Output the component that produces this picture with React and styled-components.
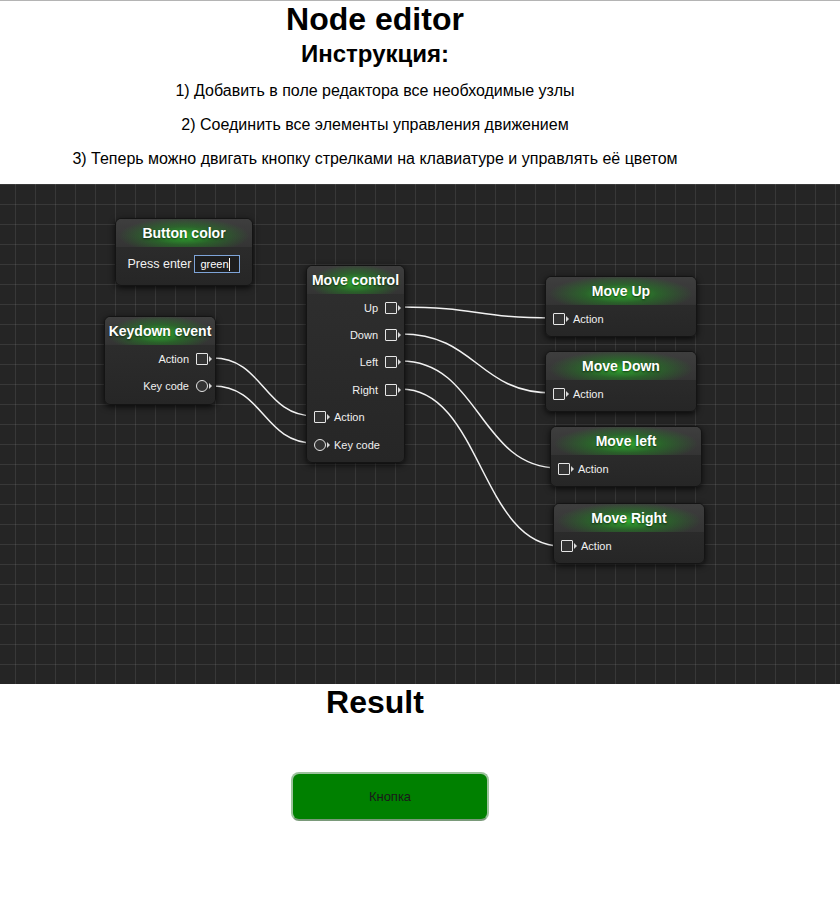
import React from "react";
import styled, { createGlobalStyle } from "styled-components";

const Global = createGlobalStyle`
  html, body { margin: 0; padding: 0; background: #fff; }
  body { font-family: "Liberation Sans", Arial, sans-serif; border-top: 1px solid #b4b4b4; }
`;

const Page = styled.div`
  width: 840px;
`;

const Intro = styled.header`
  width: 750px;
  text-align: center;
  color: #000;
`;

const Title = styled.h1`
  margin: 0;
  font-size: 32px;
  line-height: 37px;
  font-weight: 700;
`;

const Subtitle = styled.h2`
  margin: 2px 0 0;
  font-size: 24px;
  line-height: 27px;
  font-weight: 700;
`;

const Steps = styled.div`
  display: flex;
  flex-direction: column;
  gap: 16px;
  padding-top: 15px;
`;

const Step = styled.p`
  margin: 0;
  font-size: 16px;
  line-height: 18px;
`;

const Canvas = styled.section`
  position: relative;
  margin-top: 16px;
  width: 840px;
  height: 500px;
  background-color: #252525;
  background-image:
    linear-gradient(to right, rgba(255,255,255,0.085) 1px, transparent 1px),
    linear-gradient(to bottom, rgba(255,255,255,0.085) 1px, transparent 1px);
  background-size: 20px 20px;
  background-position: 15px 0;
  overflow: hidden;
`;

const Wires = styled.svg`
  position: absolute;
  left: 0;
  top: 0;
  pointer-events: none;
`;

const NodeBox = styled.div`
  position: absolute;
  box-sizing: border-box;
  border-radius: 6px;
  background: linear-gradient(to bottom, #2f2f2f, #262626);
  border: 1px solid #141414;
  box-shadow: 0 2px 6px rgba(0,0,0,0.75), inset 0 1px 0 rgba(255,255,255,0.12);
  padding-bottom: 4px;
  font-family: "Liberation Sans", Arial, sans-serif;
  color: #fff;
`;

const NodeHeader = styled.div`
  height: 28px;
  display: flex;
  align-items: center;
  justify-content: center;
  border-radius: 6px 6px 0 0;
  background:
    radial-gradient(ellipse 48% 65% at 50% 60%, rgba(45,185,45,0.9) 0%, rgba(30,140,30,0.5) 50%, rgba(30,120,30,0) 100%),
    linear-gradient(to bottom, #3e3e3e, #343434);
  font-size: 14px;
  font-weight: 700;
  text-shadow: 0 1px 2px rgba(0,0,0,0.6);
  white-space: nowrap;
`;

const Row = styled.div`
  height: 27.4px;
  display: flex;
  align-items: center;
  justify-content: ${(p) => (p.$out ? "flex-end" : "flex-start")};
  padding: ${(p) => (p.$out ? "0 3px 0 0" : "0 0 0 7px")};
  gap: 4px;
  font-size: 11px;
  color: #f0f0f0;
  white-space: nowrap;
`;

const Label = styled.span`
  ${(p) => (p.$out ? "margin-right: 3px;" : "margin-left: 0;")}
`;

const SocketWrap = styled.span`
  display: inline-flex;
  align-items: center;
  gap: 1px;
`;

const Socket = styled.span`
  display: inline-block;
  box-sizing: border-box;
  width: 12px;
  height: 12px;
  border: 1.5px solid #e6e6e6;
  background: #333;
  border-radius: ${(p) => (p.$round ? "50%" : "1px")};
`;

const Arrow = styled.span`
  width: 0;
  height: 0;
  border-top: 3px solid transparent;
  border-bottom: 3px solid transparent;
  border-left: 3px solid #d8d8d8;
`;

const FieldRow = styled.div`
  display: flex;
  align-items: center;
  justify-content: center;
  gap: 3px;
  height: 34px;
  font-size: 12.5px;
  color: #f2f2f2;
`;

const Field = styled.div`
  box-sizing: border-box;
  width: 46px;
  height: 18px;
  border: 1px solid #7ea4d8;
  background: #1e1e1e;
  color: #fff;
  font-size: 11px;
  line-height: 16px;
  padding-left: 5px;
  display: flex;
  align-items: center;
`;

const Caret = styled.span`
  display: inline-block;
  width: 1px;
  height: 13px;
  background: #fff;
`;

const ResultTitle = styled.h2`
  margin: 0;
  width: 750px;
  text-align: center;
  font-size: 32px;
  line-height: 37px;
  font-weight: 700;
`;

const ResultArea = styled.div`
  padding: 51px 0 0 291px;
  height: 120px;
`;

const GreenButton = styled.button`
  width: 198px;
  height: 49px;
  box-sizing: border-box;
  background: #008000;
  border: 2px solid #9cc29c;
  border-bottom-color: #7a9a7a;
  border-radius: 8px;
  color: #1a1a1a;
  font-family: "Liberation Sans", Arial, sans-serif;
  font-size: 13px;
  cursor: pointer;
`;

function Port({ label, out, round }) {
  const sock = (
    <SocketWrap>
      <Socket $round={round} />
      <Arrow />
    </SocketWrap>
  );
  return (
    <Row $out={out}>
      {out ? (
        <>
          <Label $out>{label}</Label>
          {sock}
        </>
      ) : (
        <>
          {sock}
          <Label>{label}</Label>
        </>
      )}
    </Row>
  );
}

function Node({ x, y, w, title, children }) {
  return (
    <NodeBox style={{ left: x, top: y, width: w }}>
      <NodeHeader>{title}</NodeHeader>
      {children}
    </NodeBox>
  );
}

const wires = [
  [213, 174, 314, 232],
  [213, 202, 314, 259],
  [401, 123, 553, 134],
  [401, 150, 553, 209],
  [401, 177, 558, 284],
  [401, 205, 561, 362],
];

function wirePath([x1, y1, x2, y2]) {
  const d = (x2 - x1) * 0.5;
  return `M${x1} ${y1} C${x1 + d} ${y1}, ${x2 - d} ${y2}, ${x2} ${y2}`;
}

const actionNodes = [
  { title: "Move Up", x: 545, y: 92 },
  { title: "Move Down", x: 545, y: 167 },
  { title: "Move left", x: 550, y: 242 },
  { title: "Move Right", x: 553, y: 319 },
];

export default function App() {
  return (
    <Page>
      <Global />
      <Intro>
        <Title>Node editor</Title>
        <Subtitle>Инструкция:</Subtitle>
        <Steps>
          <Step>1) Добавить в поле редактора все необходимые узлы</Step>
          <Step>2) Соединить все элементы управления движением</Step>
          <Step>3) Теперь можно двигать кнопку стрелками на клавиатуре и управлять её цветом</Step>
        </Steps>
      </Intro>
      <Canvas>
        <Wires width="840" height="500">
          {wires.map((w, i) => (
            <path key={i} d={wirePath(w)} fill="none" stroke="#f2f2f2" strokeWidth="1.5" />
          ))}
        </Wires>
        <Node x={115} y={34} w={138} title="Button color">
          <FieldRow>
            Press enter
            <Field>
              green<Caret />
            </Field>
          </FieldRow>
        </Node>
        <Node x={104} y={132} w={112} title="Keydown event">
          <Port label="Action" out />
          <Port label="Key code" out round />
        </Node>
        <Node x={306} y={81} w={99} title="Move control">
          <Port label="Up" out />
          <Port label="Down" out />
          <Port label="Left" out />
          <Port label="Right" out />
          <Port label="Action" />
          <Port label="Key code" round />
        </Node>
        {actionNodes.map((n) => (
          <Node key={n.title} x={n.x} y={n.y} w={152} title={n.title}>
            <Port label="Action" />
          </Node>
        ))}
      </Canvas>
      <ResultTitle>Result</ResultTitle>
      <ResultArea>
        <GreenButton>Кнопка</GreenButton>
      </ResultArea>
    </Page>
  );
}
